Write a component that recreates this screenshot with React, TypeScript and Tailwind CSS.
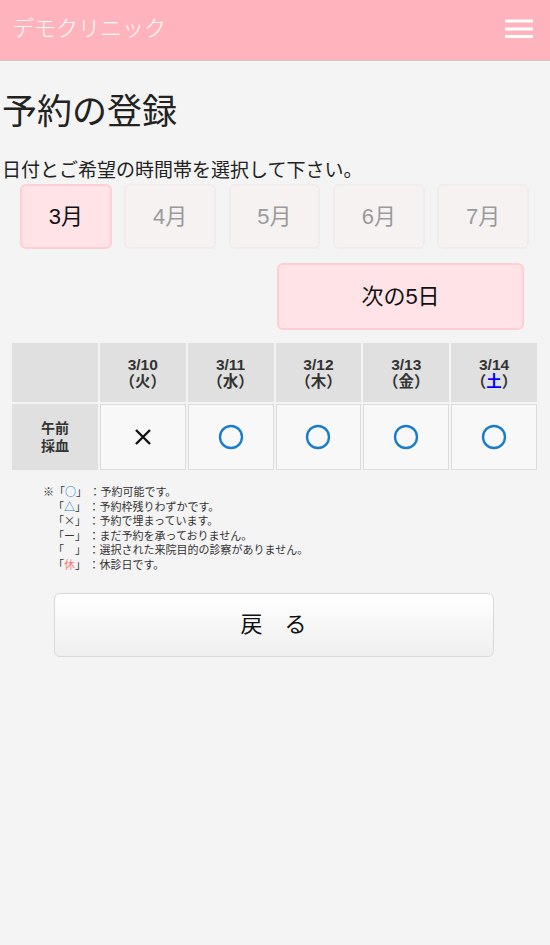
const months = ["3月", "4月", "5月", "6月", "7月"];

const days = [
  { date: "3/10", wd: "火", mark: "x" },
  { date: "3/11", wd: "水", mark: "o" },
  { date: "3/12", wd: "木", mark: "o" },
  { date: "3/13", wd: "金", mark: "o" },
  { date: "3/14", wd: "土", mark: "o", sat: true },
];

const font = "font-['Liberation_Sans','Noto_Sans_CJK_JP',sans-serif]";

function Circle() {
  return (
    <svg width="26" height="26" viewBox="0 0 26 26">
      <circle cx="13" cy="13" r="11" fill="none" stroke="#1a7dcc" strokeWidth="2.4" />
    </svg>
  );
}

function Cross() {
  return (
    <svg width="18" height="18" viewBox="0 0 18 18">
      <path d="M2 2 L16 16 M16 2 L2 16" stroke="#111" strokeWidth="2.4" />
    </svg>
  );
}

function Hamburger() {
  return (
    <svg width="28" height="20" viewBox="0 0 28 20">
      <path d="M0 2 H28 M0 10 H28 M0 17.5 H28" stroke="#fff" strokeWidth="3" />
    </svg>
  );
}

export default function App() {
  return (
    <div className={`min-h-[945px] bg-[#f4f4f4] ${font} text-[#222]`}>
      <header className="flex h-[61px] items-center justify-between border-b border-[#c9c9c9] bg-[#ffb3bc] pl-3 pr-[17px]">
        <h1 className="pb-1 text-[22px] font-light text-white">デモクリニック</h1>
        <div className="pb-[2px]">
          <Hamburger />
        </div>
      </header>

      <main className="px-[2px]">
        <h2 className="mt-[31px] text-[35px] leading-[40px]">予約の登録</h2>
        <p className="mt-[27px] text-[19px] leading-[24px]">日付とご希望の時間帯を選択して下さい。</p>

        <div className="ml-[18px] mr-[19px] mt-[1px] flex gap-[12.5px]">
          {months.map((m, i) => (
            <button
              key={m}
              className={
                i === 0
                  ? "flex h-[65px] flex-1 items-center justify-center rounded-md border-2 border-[#ffcdd4] bg-[#ffe3e7] text-[22px] text-[#111]"
                  : "flex h-[65px] flex-1 items-center justify-center rounded-md border-2 border-[#f1ebeb] bg-[#f7f2f2] text-[22px] text-[#9a9a9a]"
              }
            >
              {m}
            </button>
          ))}
        </div>

        <div className="mt-[14px] flex justify-end pr-[24px]">
          <button className="flex h-[67px] w-[247px] items-center justify-center rounded-md border-2 border-[#ffcdd4] bg-[#ffe3e7] text-[22px] text-[#111]">
            次の5日
          </button>
        </div>

        <div className="ml-[10px] mr-[11px] mt-[13px] grid grid-cols-6 gap-[2px]">
          <div className="h-[59px] bg-[#e0e0e0]" />
          {days.map((d) => (
            <div
              key={d.date}
              className="flex h-[59px] flex-col items-center justify-center bg-[#e0e0e0] text-[15.5px] font-bold leading-[17px] text-[#333]"
            >
              <span>{d.date}</span>
              <span>
                （<span className={d.sat ? "text-[#0000ff]" : ""}>{d.wd}</span>）
              </span>
            </div>
          ))}
          <div className="flex h-[66px] flex-col items-center justify-center bg-[#e0e0e0] text-[14px] font-bold leading-[18px] text-[#333]">
            <span>午前</span>
            <span>採血</span>
          </div>
          {days.map((d) => (
            <div
              key={d.date + "c"}
              className="flex h-[66px] items-center justify-center border border-[#dcdcdc] bg-[#f8f8f8]"
            >
              {d.mark === "o" ? <Circle /> : <Cross />}
            </div>
          ))}
        </div>

        <div className="mt-[14px] pl-[41px] font-['Noto_Sans_CJK_JP',sans-serif] text-[11px] leading-[14.6px] text-[#333]">
          <p>
            ※「<span className="font-bold text-[#1a7dcc]">○</span>」 ：予約可能です。
          </p>
          <div className="pl-[10px]">
            <p>
              「<span className="font-bold text-[#1a7dcc]">△</span>」 ：予約枠残りわずかです。
            </p>
            <p>「×」 ：予約で埋まっています。</p>
            <p>「ー」 ：まだ予約を承っておりません。</p>
            <p>「　」 ：選択された来院目的の診察がありません。</p>
            <p>
              「<span className="text-[#f08080]">休</span>」 ：休診日です。
            </p>
          </div>
        </div>

        <div className="mt-[21px] flex justify-center pr-[3px]">
          <button className="flex h-[64px] w-[440px] items-center justify-center rounded-md border border-[#d9d9d9] bg-gradient-to-b from-white to-[#efefef] text-[22px] text-[#111]">
            戻　る
          </button>
        </div>
      </main>
    </div>
  );
}
